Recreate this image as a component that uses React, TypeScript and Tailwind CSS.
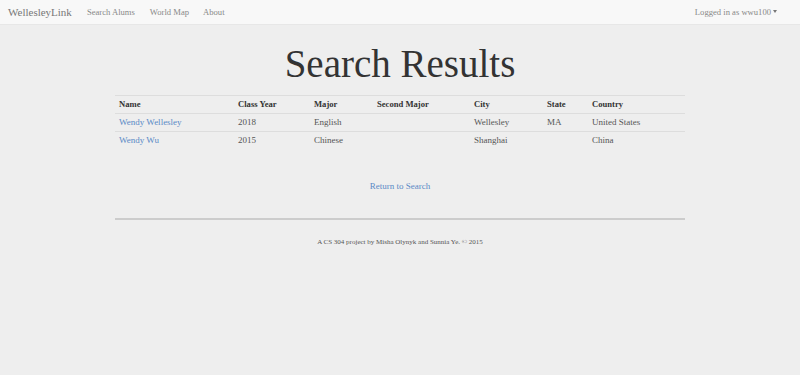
const rows = [
  { name: "Wendy Wellesley", year: "2018", major: "English", second: "", city: "Wellesley", state: "MA", country: "United States" },
  { name: "Wendy Wu", year: "2015", major: "Chinese", second: "", city: "Shanghai", state: "", country: "China" },
];

export default function App() {
  return (
    <div className="min-h-[375px] bg-[#eeeeee] text-[#333333]" style={{ fontFamily: '"Liberation Serif", "DejaVu Serif", serif' }}>
      <nav className="h-[25px] bg-[#f8f8f8] border-b border-[#e7e7e7] flex items-center px-2 text-[8.6px] text-[#888888]">
        <span className="text-[11px] text-[#777777] mr-[15px]">WellesleyLink</span>
        <span className="mr-[15px]">Search Alums</span>
        <span className="mr-[14px]">World Map</span>
        <span>About</span>
        <span className="ml-auto mr-[15px] flex items-center">
          Logged in as wwu100
          <span className="ml-[2px] w-0 h-0 border-l-[2px] border-r-[2px] border-t-[3px] border-l-transparent border-r-transparent border-t-[#777777]"></span>
        </span>
      </nav>
      <div className="w-[570px] mx-auto">
        <h1 className="text-center text-[39px] leading-none text-[#333333] mt-[19px] mb-[12px]">Search Results</h1>
        <table className="w-full text-[9px] border-collapse">
          <thead>
            <tr className="border-t border-[#dddddd] text-[#333333]">
              <th className="text-left font-bold text-[8.6px] px-1 h-[18px] w-[119px]">Name</th>
              <th className="text-left font-bold text-[8.6px] px-1 w-[76px]">Class Year</th>
              <th className="text-left font-bold text-[8.6px] px-1 w-[63px]">Major</th>
              <th className="text-left font-bold text-[8.6px] px-1 w-[97px]">Second Major</th>
              <th className="text-left font-bold text-[8.6px] px-1 w-[73px]">City</th>
              <th className="text-left font-bold text-[8.6px] px-1 w-[45px]">State</th>
              <th className="text-left font-bold text-[8.6px] px-1">Country</th>
            </tr>
          </thead>
          <tbody className="text-[#555555]">
            {rows.map((r) => (
              <tr key={r.name} className="border-t border-[#dddddd]">
                <td className="px-1 h-[18px] text-[#5a8ac6]">{r.name}</td>
                <td className="px-1">{r.year}</td>
                <td className="px-1">{r.major}</td>
                <td className="px-1">{r.second}</td>
                <td className="px-1">{r.city}</td>
                <td className="px-1">{r.state}</td>
                <td className="px-1">{r.country}</td>
              </tr>
            ))}
          </tbody>
        </table>
        <div className="text-center text-[9px] text-[#5a8ac6] mt-[30px]">Return to Search</div>
        <hr className="mt-[25px] border-0 border-t-2 border-[#cccccc]" />
        <p className="text-center text-[7px] text-[#555555] mt-[17px]">A CS 304 project by Misha Olynyk and Sunnia Ye. © 2015</p>
      </div>
    </div>
  );
}
